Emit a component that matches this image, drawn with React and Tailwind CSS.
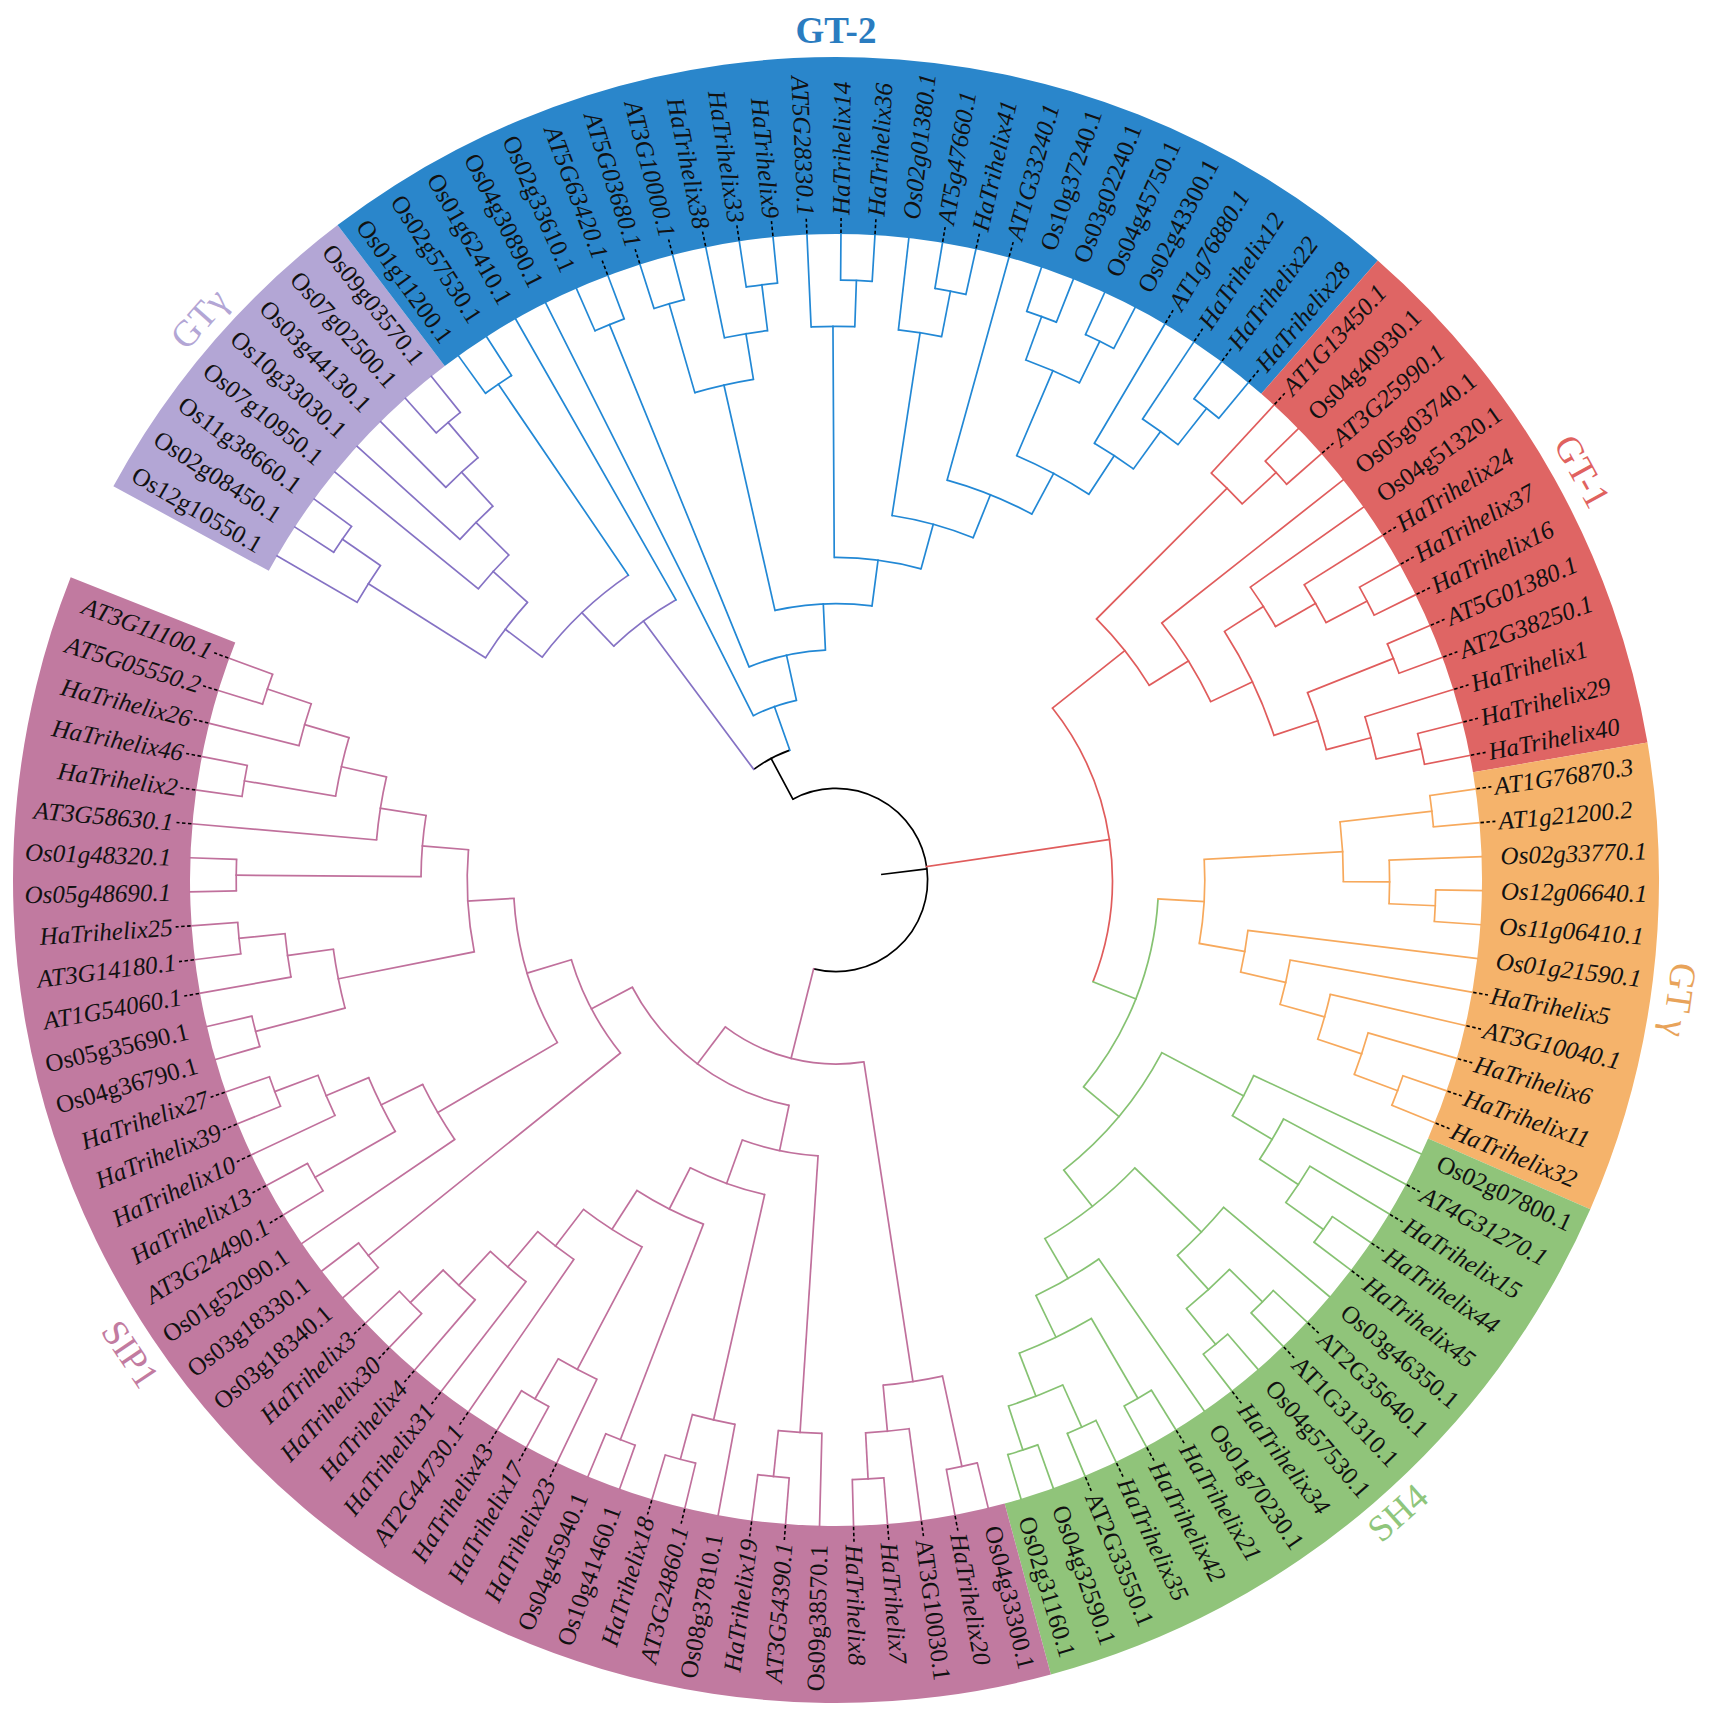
const CX = 836;
const CY = 880;
const T0 = 210.1; // angle of the first leaf
const D = 3.017; // angle between leaves
const RT = 646; // tip radius = inner edge of the coloured ring
const RO = 823; // outer edge of the ring
const STEP = 46.2; // radius per tree level
const RL = 665; // where labels start

const NAMES = [
  'Os12g10550.1', 'Os02g08450.1', 'Os11g38660.1', 'Os07g10950.1', 'Os10g33030.1', 'Os03g44130.1',
  'Os07g02500.1', 'Os09g03570.1', 'Os01g11200.1', 'Os02g57530.1', 'Os01g62410.1', 'Os04g30890.1',
  'Os02g33610.1', 'AT5G63420.1', 'AT5G03680.1', 'AT3G10000.1', 'HaTrihelix38', 'HaTrihelix33',
  'HaTrihelix9', 'AT5G28330.1', 'HaTrihelix14', 'HaTrihelix36', 'Os02g01380.1', 'AT5g47660.1',
  'HaTrihelix41', 'AT1G33240.1', 'Os10g37240.1', 'Os03g02240.1', 'Os04g45750.1', 'Os02g43300.1',
  'AT1g76880.1', 'HaTrihelix12', 'HaTrihelix22', 'HaTrihelix28', 'AT1G13450.1', 'Os04g40930.1',
  'AT3G25990.1', 'Os05g03740.1', 'Os04g51320.1', 'HaTrihelix24', 'HaTrihelix37', 'HaTrihelix16',
  'AT5G01380.1', 'AT2G38250.1', 'HaTrihelix1', 'HaTrihelix29', 'HaTrihelix40', 'AT1G76870.3',
  'AT1g21200.2', 'Os02g33770.1', 'Os12g06640.1', 'Os11g06410.1', 'Os01g21590.1', 'HaTrihelix5',
  'AT3G10040.1', 'HaTrihelix6', 'HaTrihelix11', 'HaTrihelix32', 'Os02g07800.1', 'AT4G31270.1',
  'HaTrihelix15', 'HaTrihelix44', 'HaTrihelix45', 'Os03g46350.1', 'AT2G35640.1', 'AT1G31310.1',
  'Os04g57530.1', 'HaTrihelix34', 'Os01g70230.1', 'HaTrihelix21', 'HaTrihelix42', 'HaTrihelix35',
  'AT2G33550.1', 'Os04g32590.1', 'Os02g31160.1', 'Os04g33300.1', 'HaTrihelix20', 'AT3G10030.1',
  'HaTrihelix7', 'HaTrihelix8', 'Os09g38570.1', 'AT3G54390.1', 'HaTrihelix19', 'Os08g37810.1',
  'AT3G24860.1', 'HaTrihelix18', 'Os10g41460.1', 'Os04g45940.1', 'HaTrihelix23', 'HaTrihelix17',
  'HaTrihelix43', 'AT2G44730.1', 'HaTrihelix31', 'HaTrihelix4', 'HaTrihelix30', 'HaTrihelix3',
  'Os03g18340.1', 'Os03g18330.1', 'Os01g52090.1', 'AT3G24490.1', 'HaTrihelix13', 'HaTrihelix10',
  'HaTrihelix39', 'HaTrihelix27', 'Os04g36790.1', 'Os05g35690.1', 'AT1G54060.1', 'AT3G14180.1',
  'HaTrihelix25', 'Os05g48690.1', 'Os01g48320.1', 'AT3G58630.1', 'HaTrihelix2', 'HaTrihelix46',
  'HaTrihelix26', 'AT5G05550.2', 'AT3G11100.1',
];

const OS_ITALIC = new Set([
  'Os02g01380.1', 'Os02g33770.1', 'Os12g06640.1', 'Os11g06410.1', 'Os01g21590.1',
  'Os05g48690.1', 'Os01g48320.1',
]);
const AT_UPRIGHT = new Set(['AT2G35640.1', 'AT1G31310.1', 'AT2G33550.1', 'AT3G10030.1']);

// clade ranges: [end leaf (exclusive), ring colour, branch colour]
const GROUPS = [
  { end: 8, bg: '#b3a6d5', line: '#8572c4' },
  { end: 34, bg: '#2a86cb', line: '#2288d5' },
  { end: 47, bg: '#df6564', line: '#e05c5c' },
  { end: 58, bg: '#f5b36b', line: '#f7a95c' },
  { end: 75, bg: '#90c47a', line: '#86c272' },
  { end: 117, bg: '#c17aa0', line: '#c0709c' },
];

const groupOf = (i) => GROUPS.findIndex((g) => i < g.end);

// tree (cladogram), leaves are indices into NAMES
const N = (col, ...k) => ({ k, col });

const P1 = N('#8572c4', N('#8572c4', [[0, [1, 2]], [3, [4, [5, [6, 7]]]]], [8, 9]), 10);
const BLUE = [11, [[12, 13], [[[14, 15], [16, [17, 18]]],
  [[19, [20, 21]], [[22, [23, 24]], [25, [[[26, 27], [28, 29]], [30, [31, [32, 33]]]]]]]]]];
const A = N('#000', P1, BLUE);

const RED = [[34, [35, 36]], [37, [[38, [39, [40, 41]]], [[42, 43], [44, [45, 46]]]]]];
const ORANGE = [[[47, 48], [49, [50, 51]]], [52, [53, [54, [55, [56, 57]]]]]];
const GREEN = [[58, [59, [60, [61, 62]]]],
  [[63, [[64, 65], [66, 67]]], [68, [[69, 70], [[71, 72], [73, 74]]]]]];
const B = [RED, N('#86c272', ORANGE, GREEN)];

const S8 = [[80, [81, 82]], [[83, [84, 85]], [[86, 87], [[88, [89, 90]], [91, [92, [93, [94, 95]]]]]]]];
const X = [[96, 97], [[98, [[99, 100], [101, [102, 103]]]],
  [[[104, 105], [106, [107, 108]]], [[109, 110], [111, [[112, 113], [114, [115, 116]]]]]]]];
const S = [[[75, 76], [77, [78, 79]]], [S8, X]];

const ROOT = N('#000', A, B, S);

const rad = (h) => RT - STEP * h;
const pt = (r, a) => [CX + r * Math.cos((a * Math.PI) / 180), CY + r * Math.sin((a * Math.PI) / 180)];

function layout(node) {
  if (typeof node === 'number') {
    return { leaf: node, a: T0 + node * D, h: 0, col: GROUPS[groupOf(node)].line };
  }
  const list = Array.isArray(node) ? node : node.k;
  const kids = list.map(layout);
  const h = Math.max(...kids.map((k) => k.h)) + 1;
  const a = (kids[0].a + kids[kids.length - 1].a) / 2;
  const col = (!Array.isArray(node) && node.col) || kids[0].col;
  return { kids, a, h, col };
}

function arcPath(r, a1, a2) {
  const [x1, y1] = pt(r, a1);
  const [x2, y2] = pt(r, a2);
  const large = a2 - a1 > 180 ? 1 : 0;
  return `M${x1.toFixed(2)} ${y1.toFixed(2)}A${r} ${r} 0 ${large} 1 ${x2.toFixed(2)} ${y2.toFixed(2)}`;
}

function sectorPath(r1, r2, a1, a2) {
  const [x1, y1] = pt(r2, a1);
  const [x2, y2] = pt(r2, a2);
  const [x3, y3] = pt(r1, a2);
  const [x4, y4] = pt(r1, a1);
  const large = a2 - a1 > 180 ? 1 : 0;
  return `M${x1} ${y1}A${r2} ${r2} 0 ${large} 1 ${x2} ${y2}L${x3} ${y3}A${r1} ${r1} 0 ${large} 0 ${x4} ${y4}Z`;
}

function Branches({ root }) {
  const out = [];
  const walk = (n) => {
    if (n.leaf !== undefined) return;
    const r = rad(n.h);
    out.push(
      <path key={`a${out.length}`} d={arcPath(r, n.kids[0].a, n.kids[n.kids.length - 1].a)}
        stroke={n.col} strokeWidth="1.7" fill="none" />
    );
    n.kids.forEach((k) => {
      const r2 = k.leaf !== undefined ? RT : rad(k.h);
      const [x1, y1] = pt(r, k.a);
      const [x2, y2] = pt(r2, k.a);
      out.push(
        <line key={`l${out.length}`} x1={x1} y1={y1} x2={x2} y2={y2}
          stroke={k.col} strokeWidth="1.7" strokeLinecap="square" />
      );
      walk(k);
    });
  };
  walk(root);
  // root stub
  const [sx1, sy1] = pt(rad(13), root.a);
  const [sx2, sy2] = pt(rad(12), root.a);
  out.push(<line key="stub" x1={sx1} y1={sy1} x2={sx2} y2={sy2} stroke="#000" strokeWidth="1.7" />);
  return <g>{out}</g>;
}

function Label({ i }) {
  const name = NAMES[i];
  const a = T0 + i * D;
  let na = ((a + 180) % 360) - 180;
  const flip = na > 90 || na < -90;
  const italic =
    name.startsWith('Ha') || (name.startsWith('AT') && !AT_UPRIGHT.has(name)) || OS_ITALIC.has(name);
  const dashed = name.startsWith('Ha') || name.startsWith('AT');
  const [dx1, dy1] = pt(RT + 1, a);
  const [dx2, dy2] = pt(RL - 3, a);
  return (
    <g>
      {dashed && (
        <line x1={dx1} y1={dy1} x2={dx2} y2={dy2} stroke="#000" strokeWidth="1.6" strokeDasharray="3.5 2.5" />
      )}
      <text
        transform={`translate(${CX} ${CY}) rotate(${a}) translate(${RL} 0)${flip ? ' rotate(180)' : ''}`}
        textAnchor={flip ? 'end' : 'start'}
        dominantBaseline="central"
        fontSize="25"
        fontStyle={italic ? 'italic' : 'normal'}
        fill="#111"
      >
        {name}
      </text>
    </g>
  );
}

function CladeLabel({ text, ang, r, rot, color, bold }) {
  const [x, y] = pt(r, ang);
  return (
    <text
      transform={`translate(${x} ${y}) rotate(${rot})`}
      textAnchor="middle"
      dominantBaseline="central"
      fontSize="37"
      fontWeight={bold ? 'bold' : 'normal'}
      fill={color}
    >
      {text}
    </text>
  );
}

export default function App() {
  const root = layout(ROOT);
  let start = 0;
  const sectors = GROUPS.map((g, gi) => {
    const a1 = T0 + (start - 0.5) * D;
    const a2 = T0 + (g.end - 0.5) * D;
    start = g.end;
    return <path key={gi} d={sectorPath(RT, RO, a1, a2)} fill={g.bg} />;
  });

  return (
    <div className="w-[1722px] h-[1722px] bg-white">
      <svg width="1722" height="1722" viewBox="0 0 1722 1722"
        fontFamily="'Liberation Serif', 'Times New Roman', serif">
        <g>{sectors}</g>
        <Branches root={root} />
        <g>
          {NAMES.map((_, i) => (
            <Label key={i} i={i} />
          ))}
        </g>
        <text x={836} y={30} textAnchor="middle" dominantBaseline="central" fontSize="37"
          fontWeight="bold" fill="#2a7cc0">
          GT-2
        </text>
        <CladeLabel text="GT-1" ang={-28.7} r={851} rot={61.3} color="#e0625f" />
        <CladeLabel text="GT γ" ang={8.1} r={852} rot={98.1} color="#e8a35a" />
        <CladeLabel text="SH4" ang={48.4} r={846} rot={-41.6} color="#8fc67c" />
        <CladeLabel text="SIP1" ang={146.1} r={850} rot={56.1} color="#c27ba0" />
        <CladeLabel text="GTγ" ang={221.4} r={849} rot={-48.6} color="#b3a6d5" />
      </svg>
    </div>
  );
}
